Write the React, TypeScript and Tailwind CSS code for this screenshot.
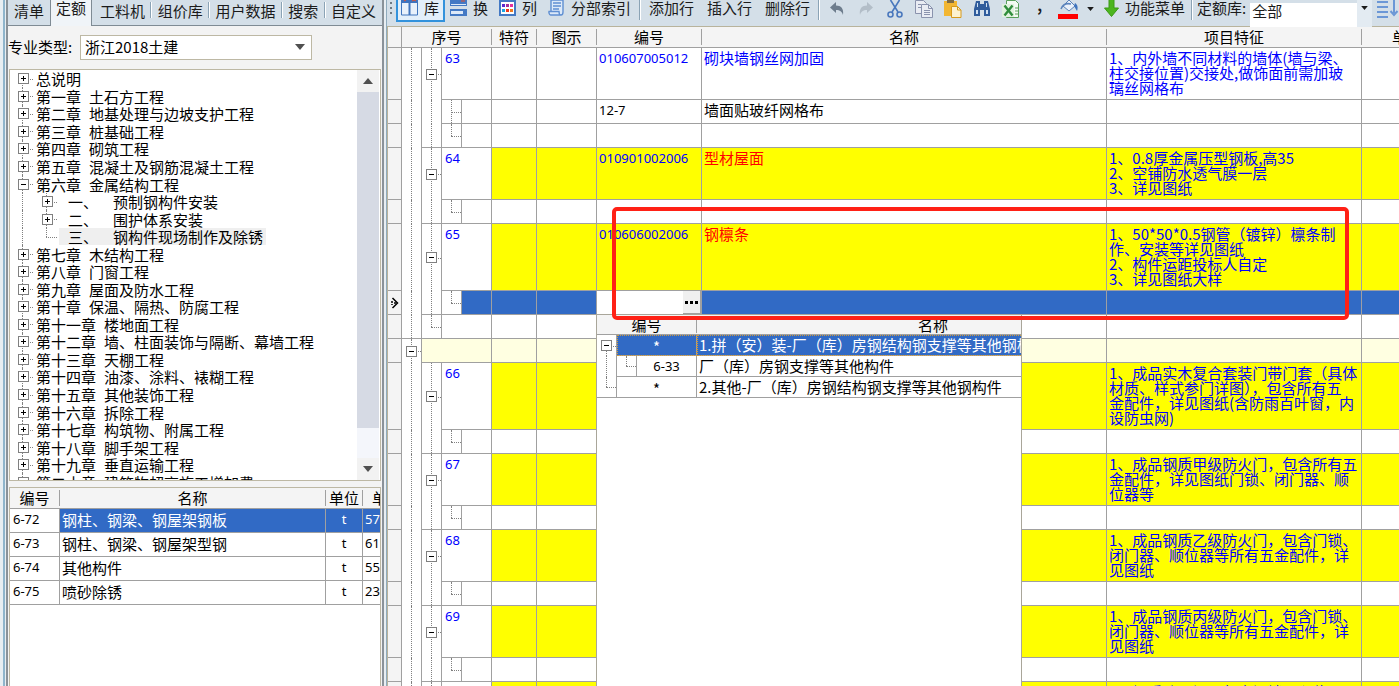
import React from 'react';
import clsx from 'clsx';

type GuideLine = 'full' | 'top' | 'bottom';

interface TreeItem {
  chapter: string;
  title: string;
  child?: boolean;
  open?: boolean;
  selected?: boolean;
}

interface QuotaRow {
  code: string;
  name: string;
  unit: string;
  price: string;
}

interface BillRow {
  kind: 'item' | 'child' | 'edit' | 'end' | 'section';
  no?: string;
  code?: string;
  name?: string;
  features?: string[];
  plain?: boolean;
  last?: boolean;
}

const treeItems: TreeItem[] = [
  { chapter: '总说明', title: '' },
  { chapter: '第一章', title: '土石方工程' },
  { chapter: '第二章', title: '地基处理与边坡支护工程' },
  { chapter: '第三章', title: '桩基础工程' },
  { chapter: '第四章', title: '砌筑工程' },
  { chapter: '第五章', title: '混凝土及钢筋混凝土工程' },
  { chapter: '第六章', title: '金属结构工程', open: true },
  { chapter: '一、', title: '预制钢构件安装', child: true },
  { chapter: '二、', title: '围护体系安装', child: true },
  { chapter: '三、', title: '钢构件现场制作及除锈', child: true, selected: true },
  { chapter: '第七章', title: '木结构工程' },
  { chapter: '第八章', title: '门窗工程' },
  { chapter: '第九章', title: '屋面及防水工程' },
  { chapter: '第十章', title: '保温、隔热、防腐工程' },
  { chapter: '第十一章', title: '楼地面工程' },
  { chapter: '第十二章', title: '墙、柱面装饰与隔断、幕墙工程' },
  { chapter: '第十三章', title: '天棚工程' },
  { chapter: '第十四章', title: '油漆、涂料、裱糊工程' },
  { chapter: '第十五章', title: '其他装饰工程' },
  { chapter: '第十六章', title: '拆除工程' },
  { chapter: '第十七章', title: '构筑物、附属工程' },
  { chapter: '第十八章', title: '脚手架工程' },
  { chapter: '第十九章', title: '垂直运输工程' },
  { chapter: '第二十章', title: '建筑物超高施工增加费' }
];

const quotaRows: QuotaRow[] = [
  { code: '6-72', name: '钢柱、钢梁、钢屋架钢板', unit: 't', price: '57' },
  { code: '6-73', name: '钢柱、钢梁、钢屋架型钢', unit: 't', price: '61' },
  { code: '6-74', name: '其他构件', unit: 't', price: '55' },
  { code: '6-75', name: '喷砂除锈', unit: 't', price: '23' }
];

const billRows: BillRow[] = [
  {
    kind: 'item',
    no: '63',
    code: '010607005012',
    name: '砌块墙钢丝网加固',
    plain: true,
    features: ['1、内外墙不同材料的墙体(墙与梁、', '柱交接位置)交接处,做饰面前需加玻', '璃丝网格布']
  },
  { kind: 'child', code: '12-7', name: '墙面贴玻纤网格布' },
  { kind: 'child', last: true },
  {
    kind: 'item',
    no: '64',
    code: '010901002006',
    name: '型材屋面',
    features: ['1、0.8厚金属压型钢板,高35', '2、空铺防水透气膜一层', '3、详见图纸']
  },
  { kind: 'child', last: true },
  {
    kind: 'item',
    no: '65',
    code: '010606002006',
    name: '钢檩条',
    features: ['1、50*50*0.5钢管（镀锌）檩条制', '作、安装等详见图纸', '2、构件运距投标人自定', '3、详见图纸大样']
  },
  { kind: 'edit', last: true },
  { kind: 'end' },
  { kind: 'section' },
  {
    kind: 'item',
    no: '66',
    features: ['1、成品实木复合套装门带门套（具体', '材质、样式参门详图），包含所有五', '金配件，详见图纸(含防雨百叶窗，内', '设防虫网)']
  },
  { kind: 'child', last: true },
  {
    kind: 'item',
    no: '67',
    features: ['1、成品钢质甲级防火门，包含所有五', '金配件，详见图纸门锁、闭门器、顺', '位器等']
  },
  { kind: 'child', last: true },
  {
    kind: 'item',
    no: '68',
    features: ['1、成品钢质乙级防火门，包含门锁、', '闭门器、顺位器等所有五金配件，详', '见图纸']
  },
  { kind: 'child', last: true },
  {
    kind: 'item',
    no: '69',
    features: ['1、成品钢质丙级防火门，包含门锁、', '闭门器、顺位器等所有五金配件，详', '见图纸']
  },
  { kind: 'child', last: true },
  {
    kind: 'item',
    no: '70',
    features: ['1、钢质防火门，包含门锁、顺位器、', '闭门器等所有五金配件，详', '见图纸']
  }
];

// Dotted tree lines, drawn inside a 20px wide relative box
const Guide = ({ line, branch }: { line?: GuideLine; branch?: boolean }) => (
  <>
    {line && (
      <i
        className={clsx(
          'absolute left-[9px] border-l border-dotted border-[#808080]',
          line === 'full' && 'inset-y-0',
          line === 'top' && 'top-0 bottom-1/2',
          line === 'bottom' && 'top-1/2 bottom-0'
        )}
      />
    )}
    {branch && <i className="absolute left-[9px] right-0 top-1/2 border-t border-dotted border-[#808080]" />}
  </>
);

const Toggle = ({ open }: { open?: boolean }) => (
  <button
    type="button"
    aria-label={open ? '折叠' : '展开'}
    className="relative mx-auto block h-[11px] w-[11px] border border-[#808080] bg-white"
  >
    <svg className="block h-[9px] w-[9px]" viewBox="0 0 9 9" stroke="#000" shapeRendering="crispEdges">
      <path d={open ? 'M2 4.5h5' : 'M2 4.5h5M4.5 2v5'} />
    </svg>
  </button>
);

const Caret = ({ className }: { className?: string }) => (
  <svg className={className} viewBox="0 0 10 6" fill="currentColor" aria-hidden="true">
    <path d="M0 0h10L5 6z" />
  </svg>
);

const ColumnsIcon = () => (
  <svg className="h-4 w-[17px]" viewBox="0 0 17 16">
    <path d="M.5-1h16v16H.5z" fill="#e8f1fb" stroke="#3f74bd" />
    <path d="M0 0h17v3H0z" fill="#3d74c0" />
    <path d="M8.5 0v15" stroke="#3f74bd" strokeWidth="2" />
    <path d="M3 1l2-1M11 1l2-1 2 1" stroke="#e2522f" fill="none" />
  </svg>
);

const RowsIcon = () => (
  <svg className="h-4 w-[17px]" viewBox="0 0 17 16">
    <path d="M0 0h17v6H0zM0 9h17v7H0z" fill="#4379c4" />
    <path d="M1 4h15v1H1zM1 11h12v3H1z" fill="#dce9f8" />
    <path d="M11 1h4" stroke="#e2522f" />
  </svg>
);

const GridIcon = () => (
  <svg className="h-4 w-[17px]" viewBox="0 0 17 16">
    <path d="M1-1h15v16H1z" fill="#fff" stroke="#4379c4" strokeWidth="2" />
    <path d="M0 0h17v2H0z" fill="#4379c4" />
    <path d="M3 4h3v3H3z" fill="#5b2bd0" />
    <path d="M7 4h3v3H7z" fill="#a5319c" />
    <path d="M11 4h3v3h-3z" fill="#e5319c" />
    <path d="M3 9h3v3H3z" fill="#1da6e0" />
    <path d="M7 9h3v3H7z" fill="#f03a1c" />
    <path d="M11 9h3v3h-3z" fill="#f07a1c" />
  </svg>
);

const ScrollIcon = () => (
  <svg className="h-4 w-[17px]" viewBox="0 0 17 16" fill="none" stroke="#5f8fd2" strokeWidth="1.4">
    <path d="M3 11V0h12v12c0 2-1 3-2 3H2.500C1 15 .8 12 1 11.500h10c0 2 .5 3.500 2 3.500" fill="#dce9f8" />
    <path d="M5 3h8M5 6h8M5 9h6" />
  </svg>
);

const UndoIcon = ({ className }: { className: string }) => (
  <svg className={className} viewBox="0 0 14 14" fill="currentColor">
    <path d="M0 5.500L6 0v3.500c5 0 8 3 7 9.500-1-3.500-3-5-7-5V11z" />
  </svg>
);

const ScissorsIcon = () => (
  <svg className="h-[18px] w-4" viewBox="0 0 16 18" fill="none" stroke="#4a78bd" strokeWidth="1.600">
    <path d="M3.500 0L11 12M12.500 0L5 12" />
    <circle cx="3.500" cy="14.500" r="2.500" />
    <circle cx="12.500" cy="14.500" r="2.500" />
  </svg>
);

const CopyIcon = () => (
  <svg className="h-[18px] w-[18px]" viewBox="0 0 18 18" fill="#e9ecf3" stroke="#8a93ad">
    <path d="M.5.5h8l3 3v10H.5z" />
    <path d="M6.500 4.500h7l4 4v9h-11z" />
    <path d="M13.500 4.500v4h4M9 10.500h6M9 12.500h6M9 14.500h6M3 4.500h3M3 7.500h3" fill="none" />
  </svg>
);

const PasteIcon = () => (
  <svg className="h-[18px] w-[18px]" viewBox="0 0 18 18">
    <path d="M0 1h13v15H0z" fill="#f2b632" />
    <path d="M3 0h7v3H3z" fill="#7c6a45" />
    <path d="M7.500 6.500h6l3.500 3.500v7.500H7.500z" fill="#fdf2cf" stroke="#d69a1c" />
    <path d="M13.500 6.500V10H17" fill="none" stroke="#d69a1c" />
  </svg>
);

const BinocularsIcon = () => (
  <svg className="h-4 w-[18px]" viewBox="0 0 18 16" fill="#2f5c9c">
    <path d="M3 0h4v3h4V0h4l2 8v7h-6V9H7v6H1V8z" />
    <path d="M3 9h2v4H3zM13 9h2v4h-2zM4 2h1v4H4zM13 2h1v4h-1z" fill="#cfe0f2" />
  </svg>
);

const SheetIcon = () => (
  <svg className="h-[18px] w-[18px]" viewBox="0 0 18 18">
    <path d="M4.500.5h9l3 3v14h-12z" fill="#f3faf2" stroke="#58a05a" />
    <path d="M0 4h12v13H0z" fill="#e0f1de" />
    <path d="M2.500 5.500l8 10M10.500 5.500l-8 10" stroke="#2f8d3b" strokeWidth="2.400" />
    <path d="M13 8h3M13 11h3M13 14h3" stroke="#58a05a" />
  </svg>
);

const FillIcon = () => (
  <svg className="h-5 w-5" viewBox="0 0 20 20">
    <path d="M5 7l6-6 6 6-6 5z" fill="#eaf1fa" stroke="#5a83bb" />
    <path d="M3 10c2-5 6-6 10-5" fill="none" stroke="#5a83bb" strokeWidth="1.500" />
    <path d="M17 4c3 2 3 5 2 8l-3-5z" fill="#3f74bd" />
    <path d="M0 15h20v5H0z" fill="#f00" />
  </svg>
);

const DownArrowIcon = () => (
  <svg className="h-[18px] w-[15px]" viewBox="0 0 15 18">
    <path d="M5 0h5v9h4.500L7.500 17.500.500 9H5z" fill="#4cb51f" stroke="#3b9a16" />
  </svg>
);

const SortIcon = () => (
  <svg className="h-[18px] w-[22px]" viewBox="0 0 22 18" fill="none" stroke="#6b97d6" strokeWidth="2">
    <path d="M0 2h11M0 7h11M0 12h11M0 17h11M17 0v13" />
    <path d="M13.500 11l3.500 4 3.500-4" />
  </svg>
);

const Separator = () => <span className="h-5 w-0.5 shrink-0 self-start border-l border-r border-l-[#8ba3b5] border-r-white" />;

const LeftTabs = () => (
  <nav className="flex h-[26px] items-start border-b border-[#7f8b94] bg-[#d4dfe8] text-[#1b1b1b]">
    <button type="button" className="h-[25px] border-r border-[#7f8b94] px-1.5 pb-1 leading-5">清单</button>
    <button type="button" className="h-[26px] w-[41px] border-r border-[#7f8b94] bg-[#f0f4f8] pb-2.5 leading-4">
      定额
    </button>
    <div className="flex flex-1 justify-between pl-2 pr-1.5 leading-[22px]">
      {['工料机', '组价库', '用户数据', '搜索', '自定义'].map((tab, i) => (
        <React.Fragment key={tab}>
          {i > 0 && <span className="mt-0.5 h-4 w-0.5 border-l border-r border-l-[#8ba3b5] border-r-white" />}
          <button type="button" className="whitespace-nowrap">{tab}</button>
        </React.Fragment>
      ))}
    </div>
  </nav>
);

const ChapterTree = () => (
  <div className="flex h-[412px] overflow-hidden border border-[#bdb8a4] bg-white">
    <ul className="grid h-[421px] flex-1 auto-rows-fr">
      {treeItems.map((item, i) => (
        <li key={item.chapter} className="flex items-center pl-[3px]">
          <span className="relative flex w-5 items-center self-stretch">
            <Guide line={i === 0 ? 'bottom' : 'full'} branch={!item.child} />
            {!item.child && <Toggle open={item.open} />}
          </span>
          {item.child && (
            <span className="relative ml-1 flex w-5 items-center self-stretch">
              <Guide line={item.selected ? 'top' : 'full'} branch />
              {!item.selected && <Toggle />}
            </span>
          )}
          <span
            className={clsx(
              'flex whitespace-nowrap leading-[17px]',
              item.child ? 'ml-0.5 gap-[15px] pl-[9px] pr-[3px]' : 'gap-2 pl-[3px]',
              item.selected && 'bg-[#efefef]'
            )}
          >
            <span>{item.chapter}</span>
            <span>{item.title}</span>
          </span>
        </li>
      ))}
    </ul>
    <div className="mr-px flex w-[22px] flex-col bg-[#f4f6fb] text-[#505050]">
      <button type="button" aria-label="向上" className="flex h-[22px] items-center justify-center bg-[#f2f2f2]">
        <Caret className="h-1.5 w-3 rotate-180" />
      </button>
      <div className="h-[336px] bg-[#d6dae4]" />
      <button type="button" aria-label="向下" className="mt-auto flex h-[22px] items-center justify-center bg-[#f2f2f2]">
        <Caret className="h-1.5 w-3" />
      </button>
    </div>
  </div>
);

const QuotaTable = () => (
  <div className="mt-1.5 flex-1 overflow-hidden border border-b-0 border-[#bdb8a4] bg-white">
    <table className="w-full table-fixed border-separate border-spacing-0">
      <colgroup>
        <col className="w-[50px]" />
        <col />
        <col className="w-[37px]" />
        <col className="w-[17px]" />
      </colgroup>
      <thead>
        <tr className="h-[21px] bg-[#f4f4f4]">
          {['编号', '名称', '单位'].map(title => (
            <th key={title} className="border-b border-[#a0a0a0] p-0 font-normal">
              <div className="h-4 border-r border-[#a0a0a0] leading-4">{title}</div>
            </th>
          ))}
          <th className="overflow-hidden whitespace-nowrap border-b border-[#a0a0a0] p-0 pl-[9px] text-left font-normal leading-4">
            单价
          </th>
        </tr>
      </thead>
      <tbody>
        {quotaRows.map((row, i) => {
          const line = 'border-b border-r border-[#a0a0a0] p-0 pt-[3px] align-top';
          const cell = clsx(line, i === 0 && 'bg-[#316ac5] text-white');
          const small = "font-['Noto_Sans'] text-[13px] leading-[15px]";
          return (
            <tr key={row.code} className="h-6">
              <td className={clsx(line, small, 'pl-[3px]')}>{row.code}</td>
              <td className={clsx(cell, 'pl-0.5 leading-[15px]')}>{row.name}</td>
              <td className={clsx(cell, small, 'text-center')}>{row.unit}</td>
              <td className={clsx(cell, small, 'border-r-0 pl-0.5')}>{row.price}</td>
            </tr>
          );
        })}
      </tbody>
    </table>
  </div>
);

const LeftPanel = () => (
  <aside className="flex w-[387px] shrink-0 border-r border-[#8fabbd] bg-[#e8eef2]">
    <div className="ml-[3px] w-0.5 bg-[#8fb5cc]" />
    <div className="ml-px flex min-w-0 flex-1 flex-col border-l-2 border-r-2 border-[#8a9299] bg-[#f3f3f3]">
      <LeftTabs />
      <div className="flex h-[43px] items-center pb-px">
        <label htmlFor="major" className="w-[72px] whitespace-nowrap">专业类型:</label>
        <div className="relative">
          <select
            id="major"
            className="h-[25px] w-[232px] appearance-none border border-[#bdb8a4] bg-white pl-1 leading-5"
          >
            <option>浙江2018土建</option>
          </select>
          <Caret className="pointer-events-none absolute right-1.5 top-[9px] h-1.5 w-3 text-[#505050]" />
        </div>
      </div>
      <div className="flex min-h-0 flex-1 flex-col px-px">
        <ChapterTree />
        <QuotaTable />
      </div>
    </div>
    <div className="w-0.5 shrink-0" />
  </aside>
);

const TextButton = ({ label, icon, className }: { label: string; icon?: React.ReactNode; className?: string }) => (
  <button type="button" className={clsx('flex h-[15px] shrink-0 items-center gap-1.5 whitespace-nowrap leading-[15px]', className)}>
    {icon}
    {label}
  </button>
);

const Toolbar = () => (
  <div className="flex h-[26px] items-start bg-[#d4dfe8] text-[#1b1b1b]">
    <svg className="ml-[3px] h-4 w-[3px] shrink-0" viewBox="0 0 3 16" fill="#6d7a84">
      <path d="M0 2h2v2H0zM0 7h2v2H0zM0 12h2v2H0z" />
    </svg>
    <button
      type="button"
      className="ml-[3px] flex h-[22px] w-[49px] shrink-0 items-start gap-1.5 border-2 border-t-0 border-[#3292dc] bg-[#e2effa] pl-[3px] leading-[15px]"
    >
      <ColumnsIcon />
      库
    </button>
    <TextButton className="ml-[5px]" icon={<RowsIcon />} label="换" />
    <TextButton className="ml-[11px]" icon={<GridIcon />} label="列" />
    <TextButton className="ml-[11px]" icon={<ScrollIcon />} label="分部索引" />
    <span className="ml-2 flex"><Separator /></span>
    <TextButton className="ml-2" label="添加行" />
    <TextButton className="ml-[13px]" label="插入行" />
    <TextButton className="ml-[13px]" label="删除行" />
    <span className="ml-2 flex"><Separator /></span>
    <div className="ml-0.5 flex h-[17px] shrink-0 items-center">
      {[
        { label: '撤销', icon: <UndoIcon className="h-3.5 w-3.5 text-[#6e7d8d]" /> },
        { label: '重做', icon: <UndoIcon className="h-3.5 w-3.5 -scale-x-100 text-[#b3bec8]" /> },
        { label: '剪切', icon: <ScissorsIcon /> },
        { label: '复制', icon: <CopyIcon /> },
        { label: '粘贴', icon: <PasteIcon /> },
        { label: '查找', icon: <BinocularsIcon /> },
        { label: '导出', icon: <SheetIcon /> }
      ].map(tool => (
        <button key={tool.label} type="button" aria-label={tool.label} className="flex w-[29px] justify-center">
          {tool.icon}
        </button>
      ))}
      <button type="button" className="w-[29px] pb-2 text-center font-bold leading-[15px]">,</button>
      <button type="button" aria-label="填充颜色" className="flex w-7 justify-center"><FillIcon /></button>
      <button type="button" aria-label="更多颜色" className="flex w-4 justify-center"><Caret className="h-1 w-[7px]" /></button>
    </div>
    <TextButton className="ml-1.5" icon={<DownArrowIcon />} label="功能菜单" />
    <span className="ml-1.5 flex"><Separator /></span>
    <label htmlFor="library" className="ml-1 whitespace-nowrap leading-[15px]">定额库:</label>
    <div className="relative ml-1 flex-1">
      <select id="library" className="h-6 w-full appearance-none bg-white pb-2 pl-0.5 leading-4">
        <option>全部</option>
      </select>
      <span className="pointer-events-none absolute inset-y-0 right-0 flex w-[15px] justify-center bg-[#e3ebf2] pt-1.5">
        <Caret className="h-1 w-[7px]" />
      </span>
    </div>
    <button type="button" aria-label="排序" className="ml-[5px] shrink-0"><SortIcon /></button>
  </div>
);

const QuotaPopup = () => {
  const line = 'border-b border-r border-[#a0a0a0]';
  const focus = 'bg-[#316ac5] text-white outline-1 -outline-offset-1 outline-dotted outline-[#d09a3c]';

  return (
    <div className="absolute -left-px top-full z-10 h-[400px] w-[426px] overflow-hidden border border-[#a9a69a] bg-white text-black">
      <table className="w-[572px] table-fixed border-separate border-spacing-0 leading-4">
        <colgroup>
          <col className="w-5" />
          <col className="w-5" />
          <col className="w-[60px]" />
          <col />
        </colgroup>
        <thead>
          <tr className="h-5 bg-[#f4f4f4]">
            <th colSpan={3} className="border-b border-[#a0a0a0] p-0 font-normal">
              <div className="border-r border-[#a0a0a0]">编号</div>
            </th>
            <th className="border-b border-[#a0a0a0] p-0 font-normal">名称</th>
          </tr>
        </thead>
        <tbody className="whitespace-nowrap">
          <tr className="h-[21px]">
            <td className="relative border-r border-[#a0a0a0] p-0">
              <Guide line="bottom" branch />
              <Toggle open />
            </td>
            <td colSpan={2} className={clsx(line, focus, 'p-0 pt-1 text-center')}>*</td>
            <td className={clsx(line, focus, 'p-0 pl-0.5')}>1.拼（安）装-厂（库）房钢结构钢支撑等其他钢构件</td>
          </tr>
          <tr className="h-[21px]">
            <td className={clsx(line, 'relative border-b-0 p-0')}><Guide line="full" /></td>
            <td className={clsx(line, 'relative p-0')}><Guide line="top" branch /></td>
            <td className={clsx(line, "p-0 text-center font-['Noto_Sans'] text-[13px] leading-4")}>6-33</td>
            <td className={clsx(line, 'p-0 pl-0.5')}>厂（库）房钢支撑等其他构件</td>
          </tr>
          <tr className="h-[21px]">
            <td className={clsx(line, 'relative p-0')}><Guide line="top" branch /></td>
            <td colSpan={2} className={clsx(line, 'p-0 pt-1 text-center')}>*</td>
            <td className={clsx(line, 'p-0 pl-0.5')}>2.其他-厂（库）房钢结构钢支撑等其他钢构件</td>
          </tr>
        </tbody>
      </table>
    </div>
  );
};

const CodeEditor = () => (
  <>
    <div className="flex h-[23px] bg-white">
      <input aria-label="编号" className="min-w-0 flex-1 bg-white px-0.5 outline-none" />
      <button type="button" aria-label="选择" className="flex w-[18px] items-center justify-center border-b border-r border-[#a0a0a0] bg-[#f0f0f0]">
        <svg className="h-[3px] w-[13px]" viewBox="0 0 13 3">
          <path d="M0 0h3v3H0zM5 0h3v3H5zM10 0h3v3h-3z" />
        </svg>
      </button>
    </div>
    <QuotaPopup />
    <div className="pointer-events-none absolute left-[15px] -top-[84px] z-20 h-[113px] w-[737px] rounded-[5px] border-4 border-[#ff2116]" />
  </>
);

const BillTableRow = ({ row }: { row: BillRow }) => {
  const line = 'border-b border-r border-[#a0a0a0]';
  const { kind } = row;
  const fill = clsx(
    kind === 'item' && !row.plain && 'bg-[#ffff00]',
    kind === 'edit' && 'bg-[#316ac5]',
    kind === 'section' && 'bg-[#ffffe1]'
  );
  const height = kind !== 'item' ? 'h-6' : row.features?.length === 4 ? 'h-[67px]' : 'h-[52px]';
  const groupEnd = row.last && kind === 'child';

  return (
    <tr className={clsx(height, kind === 'item' && 'text-[#0000ff]')}>
      <td className={clsx(line, 'bg-[#f4f4f4] p-0')}>
        {kind === 'edit' && (
          <svg className="mx-auto h-3 w-2" viewBox="0 0 8 12" fill="none" stroke="#000" strokeWidth="1.500">
            <path d="M1.500 1l5 5-5 5" />
            <path d="M1 4v4M3 6h3" strokeDasharray="2 1" />
          </svg>
        )}
      </td>
      <td className={clsx('relative border-r border-[#a0a0a0] p-0', kind === 'end' && 'border-b')}>
        <Guide line="full" branch={kind === 'section'} />
        {kind === 'section' && <Toggle open />}
      </td>

      {kind === 'section' ? (
        <td colSpan={3} className={clsx(line, fill)} />
      ) : (
        <td className={clsx('relative border-r border-[#a0a0a0] p-0', (groupEnd || kind === 'edit' || kind === 'end') && 'border-b')}>
          <Guide line={kind === 'end' ? 'top' : 'full'} branch={kind === 'item' || kind === 'end'} />
          {kind === 'item' && <Toggle open />}
        </td>
      )}

      {(kind === 'item' || kind === 'end') && (
        <td colSpan={2} className={clsx(line, "p-0 pl-[3px] pt-[3px] align-top font-['Noto_Sans'] text-[13px] leading-[15px]")}>
          {row.no}
        </td>
      )}
      {(kind === 'child' || kind === 'edit') && (
        <>
          <td className={clsx(line, 'relative p-0')}>
            <Guide line={row.last ? 'top' : 'full'} branch />
          </td>
          <td className={clsx(line, fill)} />
        </>
      )}

      <td className={clsx(line, fill)} />
      <td className={clsx(line, fill)} />
      {kind === 'edit' ? (
        <td className={clsx(line, 'relative p-0')}><CodeEditor /></td>
      ) : (
        <td className={clsx(line, fill, "p-0 pl-0.5 pt-[3px] align-top font-['Noto_Sans'] text-[13px] leading-[15px]")}>{row.code}</td>
      )}
      <td className={clsx(line, fill, 'p-0 pl-0.5 pt-0.5 align-top leading-[15px]', kind === 'item' && !row.plain && 'text-[#ff0000]')}>
        {row.name}
      </td>
      <td className={clsx(line, fill, 'whitespace-nowrap p-0 pl-0.5 pt-0.5 align-top leading-[15px]')}>
        {row.features?.map(text => <p key={text}>{text}</p>)}
      </td>
      <td className={clsx(line, fill)} />
    </tr>
  );
};

const BillTable = () => (
  <div className="flex-1 overflow-hidden border-l border-t border-[#b8b39c] bg-white">
    <table className="w-[calc(100%+54px)] table-fixed border-separate border-spacing-0">
      <colgroup>
        <col className="w-3.5" />
        <col className="w-5" />
        <col className="w-5" />
        <col className="w-5" />
        <col className="w-[30px]" />
        <col className="w-[45px]" />
        <col className="w-[60px]" />
        <col className="w-[105px]" />
        <col />
        <col className="w-[255px]" />
        <col className="w-[91px]" />
      </colgroup>
      <thead>
        <tr className="h-[21px] bg-[#f4f4f4]">
          <th className="border-b border-r border-[#a0a0a0] p-0" />
          {['序号', '特符', '图示', '编号', '名称', '项目特征', '单位'].map((title, i) => (
            <th key={title} colSpan={i === 0 ? 4 : 1} className="border-b border-[#a0a0a0] p-0 font-normal">
              <div className="h-4 border-r border-[#a0a0a0] leading-4">{title}</div>
            </th>
          ))}
        </tr>
      </thead>
      <tbody>
        {billRows.map((row, i) => (
          <BillTableRow key={i} row={row} />
        ))}
      </tbody>
    </table>
  </div>
);

export default function App() {
  return (
    <div className="flex h-screen overflow-hidden bg-[#f3f3f3] font-['Noto_Sans_CJK_SC',sans-serif] text-[15px] text-black">
      <LeftPanel />
      <main className="flex min-w-0 flex-1 flex-col">
        <Toolbar />
        <BillTable />
      </main>
    </div>
  );
}
